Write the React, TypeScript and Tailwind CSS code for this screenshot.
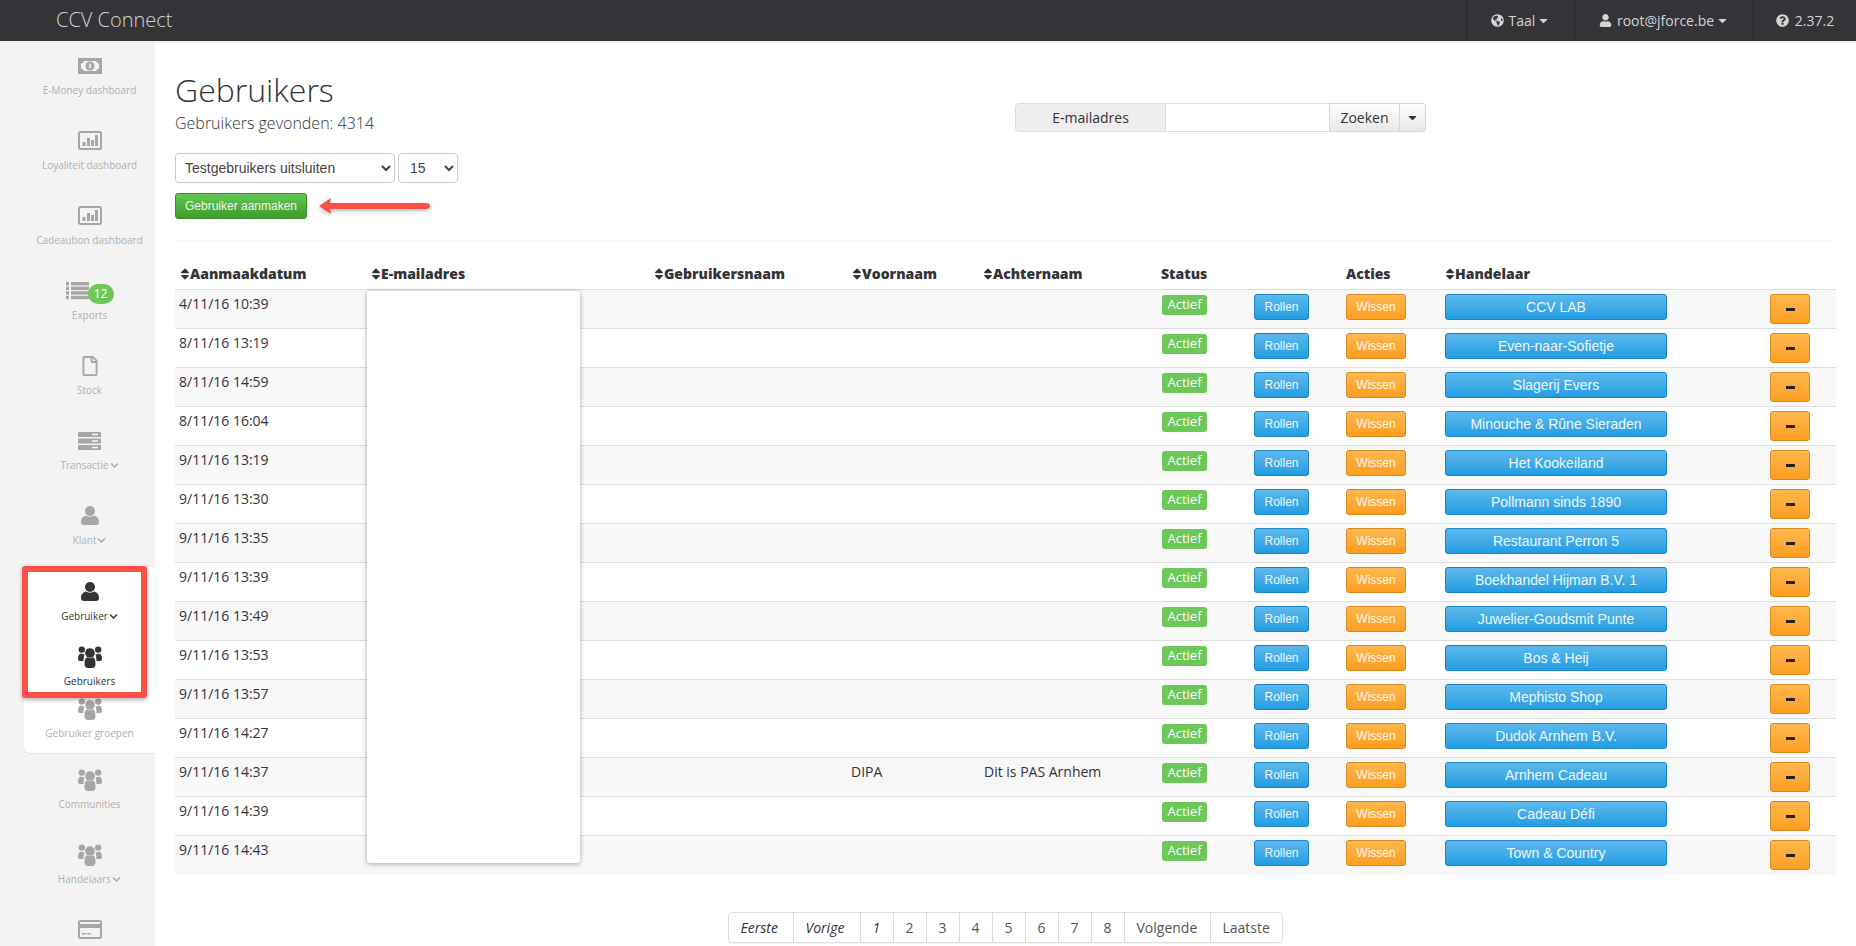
import { FaChevronDown, FaCaretDown, FaGlobeAmericas, FaQuestionCircle, FaRegFile, FaSort, FaUser } from 'react-icons/fa';

const rows = [
  { date: '4/11/16 10:39', merchant: 'CCV LAB' },
  { date: '8/11/16 13:19', merchant: 'Even-naar-Sofietje' },
  { date: '8/11/16 14:59', merchant: 'Slagerij Evers' },
  { date: '8/11/16 16:04', merchant: 'Minouche & Rûne Sieraden' },
  { date: '9/11/16 13:19', merchant: 'Het Kookeiland' },
  { date: '9/11/16 13:30', merchant: 'Pollmann sinds 1890' },
  { date: '9/11/16 13:35', merchant: 'Restaurant Perron 5' },
  { date: '9/11/16 13:39', merchant: 'Boekhandel Hijman B.V. 1' },
  { date: '9/11/16 13:49', merchant: 'Juwelier-Goudsmit Punte' },
  { date: '9/11/16 13:53', merchant: 'Bos & Heij' },
  { date: '9/11/16 13:57', merchant: 'Mephisto Shop' },
  { date: '9/11/16 14:27', merchant: 'Dudok Arnhem B.V.' },
  { date: '9/11/16 14:37', merchant: 'Arnhem Cadeau', first: 'DIPA', last: 'Dit is PAS Arnhem' },
  { date: '9/11/16 14:39', merchant: 'Cadeau Défi' },
  { date: '9/11/16 14:43', merchant: 'Town & Country' },
];

const pages = ['1', '2', '3', '4', '5', '6', '7', '8'];

function MoneyIcon() {
  return (
    <svg width="24" height="16" viewBox="0 0 24 16" fill="currentColor">
      <path fillRule="evenodd" d="M0 0H24V16H0Z M6 3 Q5.5 5 3 5.5 V10.5 Q5.5 11 6 13 H18 Q18.5 11 21 10.5 V5.5 Q18.5 5 18 3Z" />
      <circle cx="12" cy="8" r="4.5" />
      <rect x="11.2" y="5.5" width="1.6" height="5" fill="#f3f3f3" />
    </svg>
  );
}

function ChartIcon() {
  return (
    <svg width="24" height="19" viewBox="0 0 24 19" fill="currentColor">
      <rect x="1" y="1" width="22" height="17" rx="1.5" fill="none" stroke="currentColor" strokeWidth="2" />
      <rect x="4.5" y="11" width="3" height="4" />
      <rect x="9" y="7" width="3" height="8" />
      <rect x="13" y="9" width="3" height="6" />
      <rect x="17" y="4" width="3" height="11" />
    </svg>
  );
}

function ListIcon() {
  return (
    <svg width="23" height="18" viewBox="0 0 23 18" fill="currentColor">
      {[0, 4.6, 9.2, 13.8].map((y) => (
        <g key={y}>
          <rect x="0" y={y} width="3" height="3.4" />
          <rect x="5" y={y} width="18" height="3.4" />
        </g>
      ))}
    </svg>
  );
}

function ServerIcon() {
  return (
    <svg width="23" height="18" viewBox="0 0 23 18" fill="currentColor">
      {[0, 6.5, 13].map((y) => (
        <g key={y}>
          <rect x="0" y={y} width="23" height="5" rx="0.5" />
          <rect x="14" y={y + 1.7} width="6" height="1.6" fill="#f3f3f3" />
        </g>
      ))}
    </svg>
  );
}

function UserIcon() {
  return (
    <svg width="18" height="19" viewBox="0 0 18 19" fill="currentColor">
      <circle cx="9" cy="5" r="5" />
      <path d="M0 16 C0 12 2.5 10 5 9.5 C7 11 11 11 13 9.5 C15.5 10 18 12 18 16 C18 18 17 19 15 19 H3 C1 19 0 18 0 16Z" />
    </svg>
  );
}

function UsersIcon() {
  return (
    <svg width="24" height="22" viewBox="0 0 24 22" fill="currentColor">
      <circle cx="3.8" cy="3.6" r="3.2" />
      <circle cx="20.2" cy="3.6" r="3.2" />
      <path d="M0 13 C0 10 1 8 3 7.6 C4 8.4 5.5 8.4 6.5 8 C6 10 5.5 12 5.5 15 H2 C0.7 15 0 14.3 0 13Z" />
      <path d="M24 13 C24 10 23 8 21 7.6 C20 8.4 18.5 8.4 17.5 8 C18 10 18.5 12 18.5 15 H22 C23.3 15 24 14.3 24 13Z" />
      <circle cx="12" cy="7" r="4.8" />
      <path d="M6.5 18 C6.5 14 7.5 12 9 11.3 C10.5 12.6 13.5 12.6 15 11.3 C16.5 12 17.5 14 17.5 18 C17.5 20.5 16 22 14 22 H10 C8 22 6.5 20.5 6.5 18Z" />
    </svg>
  );
}

function CardIcon() {
  return (
    <svg width="24" height="19" viewBox="0 0 24 19" fill="currentColor">
      <rect x="1" y="1" width="22" height="17" rx="1.5" fill="none" stroke="currentColor" strokeWidth="2" />
      <rect x="1" y="4" width="22" height="4" />
      <rect x="4" y="13" width="4" height="1.5" />
      <rect x="9" y="13" width="4" height="1.5" />
    </svg>
  );
}

function SideItem({ icon, label, chevron, dark, h = 'h-[75px]' }: { icon: React.ReactNode; label?: string; chevron?: boolean; dark?: boolean; h?: string }) {
  return (
    <div className={`${h} flex flex-col items-center ${dark ? 'text-[#333338]' : 'text-[#a6a6a6]'}`}>
      <div className="h-[25px] flex items-center justify-center relative">{icon}</div>
      {label && (
        <div className={`mt-[5px] text-[10px] leading-[14px] flex items-center gap-[1px] ${dark ? 'text-[#333338]' : 'text-[#b0b0b0]'}`}>
          {label}
          {chevron && <FaChevronDown className={`text-[9px] ${dark ? 'text-[#333338]' : 'text-[#a6a6a6]'}`} />}
        </div>
      )}
    </div>
  );
}

function Sidebar() {
  return (
    <aside className="w-[155px] shrink-0 bg-[#f3f3f3] pt-[10px] overflow-hidden font-['Open_Sans',sans-serif]">
      <div className="pl-[24px]">
        <SideItem icon={<MoneyIcon />} label="E-Money dashboard" />
        <SideItem icon={<ChartIcon />} label="Loyaliteit dashboard" />
        <SideItem icon={<ChartIcon />} label="Cadeaubon dashboard" />
        <SideItem
          icon={
            <div className="w-[48px] h-[25px] flex items-center">
              <ListIcon />
              <span className="absolute left-[22px] top-[6px] w-[26px] h-[20px] rounded-full bg-[#6cc858] text-white text-[12px] leading-[20px] text-center">12</span>
            </div>
          }
          label="Exports"
        />
        <SideItem icon={<FaRegFile className="text-[20px]" />} label="Stock" />
        <SideItem icon={<ServerIcon />} label="Transactie" chevron />
        <SideItem icon={<UserIcon />} label="Klant" chevron h="h-[64px]" />
      </div>
      <div className="ml-[24px] bg-white rounded-bl-[6px] shadow-[0_1px_1px_rgba(0,0,0,0.08)] pt-[12px] h-[186px]">
        <SideItem icon={<UserIcon />} label="Gebruiker" chevron dark h="h-[65px]" />
        <SideItem icon={<UsersIcon />} label="Gebruikers" dark h="h-[52px]" />
        <SideItem icon={<UsersIcon />} label="Gebruiker groepen" h="h-[50px]" />
      </div>
      <div className="pt-[14px] pl-[24px]">
        <SideItem icon={<UsersIcon />} label="Communities" />
        <SideItem icon={<UsersIcon />} label="Handelaars" chevron />
        <SideItem icon={<CardIcon />} />
      </div>
    </aside>
  );
}

function Navbar() {
  return (
    <header className="h-[41px] bg-[#333338] flex items-stretch text-[#d4d4d4] font-['Open_Sans',sans-serif] text-[14px]">
      <div className="pl-[56px] text-[20px] font-light leading-[40px] flex-1">CCV Connect</div>
      <div className="w-[108px] border-l border-[#26262a] flex items-center justify-center gap-[5px]">
        <FaGlobeAmericas className="text-[13px]" />
        <span>Taal</span>
        <FaCaretDown className="text-[13px] -ml-[3px]" />
      </div>
      <div className="w-[179px] border-l border-[#26262a] flex items-center justify-center gap-[5px]">
        <FaUser className="text-[13px]" />
        <span>root@jforce.be</span>
        <FaCaretDown className="text-[13px] -ml-[3px]" />
      </div>
      <div className="w-[103px] border-l border-[#26262a] flex items-center justify-center gap-[6px]">
        <FaQuestionCircle className="text-[13px]" />
        <span>2.37.2</span>
      </div>
    </header>
  );
}

function Th({ label, sort = true }: { label: string; sort?: boolean }) {
  return (
    <th className="px-[4px] pb-[5px] text-left align-bottom font-extrabold text-[14px] leading-[20px] text-[#333338] whitespace-nowrap">
      {sort && <FaSort className="inline text-[14px] -mt-[2px] -ml-[1px] -mr-[2px]" />}
      {label}
    </th>
  );
}

const btnBlue = 'h-[26px] bg-gradient-to-b from-[#5bb9ec] to-[#1f9de2] border border-[#1b84c4] rounded-[3px] text-white/90 font-["Liberation_Sans",sans-serif]';
const btnOrange = 'bg-gradient-to-b from-[#ffb84d] to-[#fd9e1e] border border-[#d98a1f] rounded-[3px] font-["Liberation_Sans",sans-serif]';

function UsersTable() {
  return (
    <table className="w-full table-fixed border-collapse text-[14px] text-[#333338]">
      <colgroup>
        <col className="w-[191px]" />
        <col className="w-[283px]" />
        <col className="w-[198px]" />
        <col className="w-[131px]" />
        <col className="w-[179px]" />
        <col className="w-[93px]" />
        <col className="w-[92px]" />
        <col className="w-[98px]" />
        <col className="w-[326px]" />
        <col />
      </colgroup>
      <thead>
        <tr>
          <Th label="Aanmaakdatum" />
          <Th label="E-mailadres" />
          <Th label="Gebruikersnaam" />
          <Th label="Voornaam" />
          <Th label="Achternaam" />
          <Th label="Status" sort={false} />
          <th />
          <Th label="Acties" sort={false} />
          <Th label="Handelaar" />
          <th />
        </tr>
      </thead>
      <tbody>
        {rows.map((row) => (
          <tr key={row.date} className="h-[39px] border-t border-[#dddddd] odd:bg-[#f8f8f8] align-top">
            <td className="px-[4px] pt-[4px] leading-[20px]">{row.date}</td>
            <td />
            <td />
            <td className="px-[4px] pt-[4px] leading-[20px]">{row.first}</td>
            <td className="pl-[6px] pr-[2px] pt-[4px] leading-[20px]">{row.last}</td>
            <td className="px-[5px] pt-[5px]">
              <span className="block w-[45px] h-[20px] rounded-[3px] bg-[#6cc858] text-white text-[13px] leading-[18px] text-center">Actief</span>
            </td>
            <td className="pl-[4px] pt-[4px]">
              <button className={`${btnBlue} w-[55px] text-[12px] block`}>Rollen</button>
            </td>
            <td className="pl-[4px] pt-[4px]">
              <button className={`${btnOrange} w-[60px] h-[26px] text-[12px] text-white/90 block`}>Wissen</button>
            </td>
            <td className="pl-[5px] pt-[4px]">
              <button className={`${btnBlue} w-[222px] text-[14px] block`}>{row.merchant}</button>
            </td>
            <td className="pl-[4px] pt-[4px]">
              <button className={`${btnOrange} w-[40px] h-[30px] flex items-center justify-center`}>
                <span className="w-[9px] h-[3px] bg-[#222]" />
              </button>
            </td>
          </tr>
        ))}
      </tbody>
    </table>
  );
}

function Pagination() {
  const cell = 'h-[29px] px-[12px] flex items-center border-l border-[#dddddd] first:border-l-0';
  return (
    <nav className="flex justify-center mt-[37px] pr-[1px]">
      <div className="flex border border-[#dddddd] rounded-[4px] text-[14px] text-[#555] shadow-[0_1px_2px_rgba(0,0,0,0.05)]">
        <span className={`${cell} italic text-[#333338] w-[64px]`}>Eerste</span>
        <span className={`${cell} italic text-[#333338] w-[67px]`}>Vorige</span>
        {pages.map((p, i) => (
          <span key={p} className={`${cell} w-[33px] ${i === 0 ? 'italic text-[#333338]' : ''}`}>{p}</span>
        ))}
        <span className={`${cell} w-[86px]`}>Volgende</span>
        <span className={`${cell} w-[72px]`}>Laatste</span>
      </div>
    </nav>
  );
}

export default function App() {
  return (
    <div className="h-[946px] w-[1856px] overflow-hidden bg-white font-['Open_Sans',sans-serif] relative">
      <Navbar />
      <div className="h-[2px] bg-[#f0f0f0]" />
      <div className="flex h-[903px]">
        <Sidebar />
        <main className="flex-1 relative px-[20px] text-[#333338]">
          <div className="flex">
            <div className="w-[840px]">
              <h1 className="mt-[29px] text-[32px] font-light leading-[36px]">Gebruikers</h1>
              <p className="mt-[3px] text-[16px] font-light leading-[24px]">Gebruikers gevonden: 4314</p>
              <div className="mt-[18px] flex gap-[3px]">
                <select defaultValue="a" className="w-[220px] h-[30px] bg-white border border-[#cccccc] rounded-[4px] pl-[5px] text-[14px] text-[#444] font-['Liberation_Sans',sans-serif]">
                  <option value="a">Testgebruikers uitsluiten</option>
                </select>
                <select defaultValue="15" className="w-[60px] h-[30px] bg-white border border-[#cccccc] rounded-[4px] pl-[7px] text-[14px] text-[#444] font-['Liberation_Sans',sans-serif]">
                  <option value="15">15</option>
                </select>
              </div>
              <div className="mt-[10px] flex items-center">
                <button className="w-[132px] h-[26px] bg-gradient-to-b from-[#62c652] to-[#3f9b2d] border border-[#3a8f2b] rounded-[3px] text-white/90 text-[12px] font-['Liberation_Sans',sans-serif]">
                  Gebruiker aanmaken
                </button>
                <svg className="ml-[11px] drop-shadow-[0_2px_2px_rgba(0,0,0,0.25)]" width="114" height="20" viewBox="0 0 114 20">
                  <path d="M1 10 L13 2 L12 7 L108 7 Q112 7 112 10 Q112 13 108 13 L12 13 L13 18 Z" fill="#ff5045" />
                </svg>
              </div>
            </div>
            <div className="flex mt-[60px] h-[29px] text-[14px]">
              <div className="w-[151px] bg-[#eeeeee] border border-[#dddddd] rounded-l-[4px] flex items-center justify-center">E-mailadres</div>
              <input className="w-[163px] border-y border-[#dddddd] bg-white" />
              <button className="w-[71px] bg-gradient-to-b from-white to-[#e8e8e8] border border-[#d5d5d5]">Zoeken</button>
              <button className="w-[26px] bg-gradient-to-b from-white to-[#e8e8e8] border border-l-0 border-[#d5d5d5] rounded-r-[4px] flex items-center justify-center">
                <FaCaretDown className="text-[13px]" />
              </button>
            </div>
          </div>
          <div className="mt-[21px] h-px bg-[#f8f8f8]" />
          <div className="mt-[23px]">
            <UsersTable />
          </div>
          <Pagination />
          {/* whited-out e-mail column */}
          <div className="absolute left-[212px] top-[248px] w-[213px] h-[572px] bg-white rounded-[3px] shadow-[0_1px_5px_rgba(0,0,0,0.35)]" />
        </main>
      </div>
      {/* annotation */}
      <div className="absolute left-[22px] top-[566px] w-[125px] h-[132px] border-[6px] border-[#ff5045] rounded-[3px] shadow-[0_2px_4px_rgba(0,0,0,0.3)]" />
    </div>
  );
}
